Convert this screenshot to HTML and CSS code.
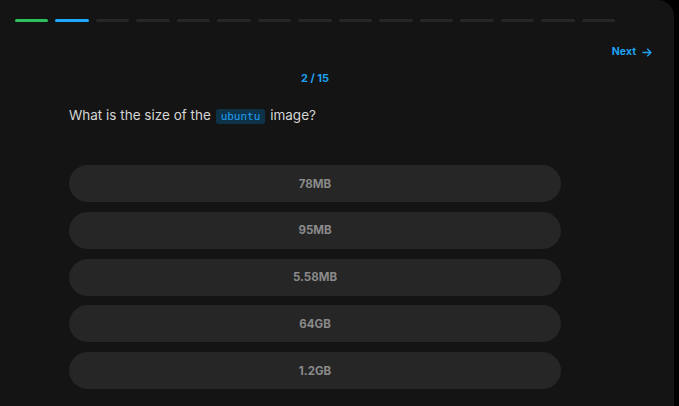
FILE: index.html
```html
<!DOCTYPE html>
<html lang="en">
<head>
<meta charset="utf-8">
<title>Quiz</title>
<link rel="stylesheet" href="styles.css">
</head>
<body>
<div class="card">
  <div class="progress">
    <span class="seg done"></span>
    <span class="seg current"></span>
    <span class="seg"></span>
    <span class="seg"></span>
    <span class="seg"></span>
    <span class="seg"></span>
    <span class="seg"></span>
    <span class="seg"></span>
    <span class="seg"></span>
    <span class="seg"></span>
    <span class="seg"></span>
    <span class="seg"></span>
    <span class="seg"></span>
    <span class="seg"></span>
    <span class="seg"></span>
  </div>
  <div class="nav">
    <a class="next">Next
      <svg class="arrow" width="10" height="9" viewBox="0 0 10 9"><path d="M0.5 4.5H9M5.2 0.8L8.9 4.5L5.2 8.2" fill="none" stroke="#1ea1f1" stroke-width="1.4"/></svg>
    </a>
  </div>
  <div class="content">
    <div class="counter">2 / 15</div>
    <p class="question">What is the size of the <code class="code">ubuntu</code> image?</p>
    <div class="options">
      <button class="option">78MB</button>
      <button class="option">95MB</button>
      <button class="option">5.58MB</button>
      <button class="option">64GB</button>
      <button class="option">1.2GB</button>
    </div>
  </div>
</div>
</body>
</html>
```
FILE: styles.css
```css
* { box-sizing: border-box; }
html, body { margin: 0; padding: 0; background: #000; }
body { font-family: Inter, "Noto Sans", sans-serif; width: 679px; height: 406px; overflow: hidden; }
.card {
  width: 674px;
  height: 406px;
  background: #141414;
  border-top-right-radius: 16px;
  padding-top: 19px;
  display: flex;
  flex-direction: column;
}
.progress {
  margin-left: 15px;
  width: 600px;
  height: 3px;
  display: flex;
  gap: 7px;
}
.seg { flex: 1; height: 3px; border-radius: 2px; background: #262626; }
.seg.done { background: #2dbf5c; }
.seg.current { background: #1ea8fd; }
.nav {
  margin-top: 22px;
  padding-right: 22px;
  display: flex;
  justify-content: flex-end;
}
.next {
  color: #1ea1f1;
  font-size: 10.5px;
  font-weight: 700;
  line-height: 16px;
  display: flex;
  align-items: center;
  gap: 6px;
}
.arrow { display: block; }
.content {
  margin-left: 69px;
  width: 492px;
  display: flex;
  flex-direction: column;
}
.counter {
  margin-top: 10px;
  text-align: center;
  color: #1ea1f1;
  font-size: 11px;
  font-weight: 700;
  line-height: 16px;
}
.question {
  margin: 19px 0 0;
  color: #d6d6d6;
  font-family: Inter, "Noto Sans", sans-serif;
  font-size: 13.5px;
  line-height: 20px;
}
.code {
  font-family: "DejaVu Sans Mono", "Liberation Mono", monospace;
  font-size: 11px;
  color: #1f9ff0;
  background: #0e3349;
  padding: 1px 5px;
  margin: 0 1px;
  border-radius: 3px;
}
.options {
  margin-top: 38px;
  display: flex;
  flex-direction: column;
  gap: 9.75px;
}
.option {
  height: 37px;
  border: none;
  border-radius: 19px;
  background: #262626;
  color: #8a8a8a;
  font-family: Inter, "Noto Sans", sans-serif;
  font-size: 11.5px;
  font-weight: 700;
  padding: 0;
}
```
